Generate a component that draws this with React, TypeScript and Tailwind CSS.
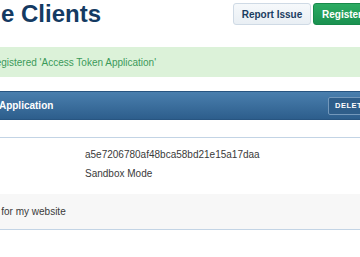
import React from "react";

const App = () => {
  return (
    <div className="w-[360px] h-[257px] overflow-hidden bg-white font-['Liberation_Sans',Arial,sans-serif]">
      {/* page header */}
      <div className="flex items-start h-[28px]">
        <div className="w-[233px] shrink-0 flex">
          <h1 className="ml-[-75px] shrink-0 whitespace-nowrap text-[24px] leading-[28px] font-bold text-[#143a62]">
            Manage Clients
          </h1>
        </div>
        <div className="mt-[3px] flex shrink-0 gap-[2px]">
          <button className="h-[22px] w-[78px] rounded-[3px] border border-[#cfdae5] bg-gradient-to-b from-[#f6f9fb] to-[#e9eff4] text-[10px] font-bold text-[#1b3d61]">
            Report Issue
          </button>
          <button className="h-[22px] w-[90px] rounded-[3px] border border-[#17894a] bg-gradient-to-b from-[#2bab62] to-[#1a9150] pl-[8px] text-left text-[10px] font-bold text-white whitespace-nowrap">
            Register Client
          </button>
        </div>
      </div>

      {/* flash message */}
      <div className="mt-[19px] flex h-[30px] items-center bg-[#dcf2d9]">
        <span className="ml-[-66px] shrink-0 whitespace-nowrap text-[10px] text-[#3b9a5a]">
          Successfully registered 'Access Token Application'
        </span>
      </div>

      {/* client panel */}
      <div className="mt-[14px] flex h-[29px] items-center border-t border-b border-[#285581] bg-gradient-to-b from-[#4a7fae] to-[#2d5e8c]">
        <div className="w-[328px] shrink-0 flex">
          <span className="ml-[-70px] shrink-0 whitespace-nowrap text-[10px] font-bold text-white">
            Access Token Application
          </span>
        </div>
        <button className="h-[18px] w-[50px] shrink-0 rounded-[2px] border border-[#7398bb] bg-[#2f5e8a] pl-[6px] text-left text-[7.5px] font-bold tracking-[0.5px] text-white">
          DELETE
        </button>
      </div>

      <div className="h-[17px]" />
      <div className="border-t border-[#c3d4e5]">
        <div className="flex flex-col gap-[5px] pl-[85px] pt-[10px] pb-[13px] text-[10px] leading-[14px] text-[#3a3a3a]">
          <span>a5e7206780af48bca58bd21e15a17daa</span>
          <span>Sandbox Mode</span>
        </div>
        <div className="flex h-[36px] items-center border-b border-[#c3d4e5] bg-[#f7f7f7]">
          <span className="ml-[-46px] shrink-0 whitespace-nowrap text-[10px] text-[#3a3a3a]">
            Test client for my website
          </span>
        </div>
      </div>
    </div>
  );
};

export default App;
